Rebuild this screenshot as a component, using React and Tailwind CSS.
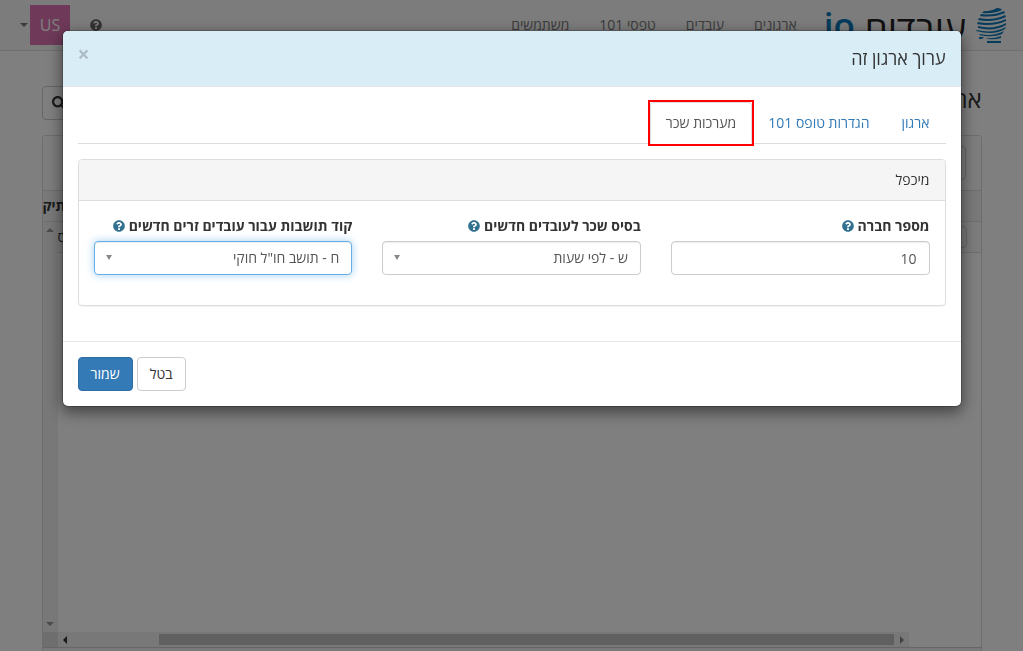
import { useState } from 'react';
import { FaQuestionCircle, FaSearch } from 'react-icons/fa';

const NAV_LINKS = ['ארגונים', 'עובדים', 'טפסי 101', 'משתמשים'];

const TABS = [
  { id: 'org', label: 'ארגון' },
  { id: 'form101', label: 'הגדרות טופס 101' },
  { id: 'payroll', label: 'מערכות שכר', marked: true },
];

export default function App() {
  return (
    <div
      dir="rtl"
      lang="he"
      className="h-screen overflow-hidden flex flex-col bg-white text-[#333] text-sm leading-5 font-['Open_Sans','Noto_Sans',sans-serif]"
    >
      <Navbar />
      <OrganizationsPage />
      <EditDialog />
    </div>
  );
}

function Navbar() {
  return (
    <header className="flex shrink-0 items-center h-[51px] px-4 bg-[#f8f8f8] border-b border-[#e0e0e0]">
      <a href="#home" className="flex items-center gap-[10px]">
        <HeadLogo />
        <span className="pt-2 text-[37px] leading-[38px] font-medium text-[#222]">עובדים</span>
        <b className="text-[35px] leading-[38px] font-semibold text-[#0a78b8]">io</b>
      </a>
      <nav className="flex mr-3">
        {NAV_LINKS.map((label) => (
          <a key={label} href="#nav" className="px-[15px] text-[#777]">
            {label}
          </a>
        ))}
      </nav>
      <div className="flex items-center mr-auto">
        <button type="button" aria-label="עזרה" className="ml-5 text-[#666]">
          <FaQuestionCircle className="size-3" />
        </button>
        <button type="button" className="flex items-center gap-[2px] pl-1">
          <span className="size-10 flex items-center justify-center bg-[#de74b4] text-white text-base">
            US
          </span>
          <Arrow points="0,2 8,2 4,6" color="#777" />
        </button>
      </div>
    </header>
  );
}

function HeadLogo() {
  return (
    <svg viewBox="0 0 31 35" className="w-[31px] h-[35px]" fill="#0a78b8">
      <path d="M8 3Q15 4 21 0Q25 0 26 2Q17 6 6 5Z" />
      <path d="M5 6Q17 8 28 3L29 5Q17 10 4 8Z" />
      <path d="M3 10Q17 13 29 7L30 9Q17 15 2 12Z" />
      <path d="M2 14Q17 17 30 11L30 13Q17 19 1 16Z" />
      <path d="M2 18Q17 22 30 15L30 17Q18 24 2 20Z" />
      <path d="M1 22Q17 26 30 19L29 21Q18 28 0 23Z" />
      <path d="M4 26Q17 29 28 23L26 26Q17 30 3 27Z" />
      <path d="M3 29L8 29L6 31L3 31Z" />
      <path d="M10 30Q18 31 25 28L25 30Q18 32 12 31Z" />
      <path d="M11 33H25V35H11Z" />
    </svg>
  );
}

function OrganizationsPage() {
  return (
    <main className="flex flex-col grow min-h-0 w-full max-w-[940px] mx-auto">
      <div className="flex items-center justify-between mt-[35px] mb-[15px]">
        <h1 className="pb-2 text-2xl leading-[26px]">ארגונים</h1>
        <button
          type="button"
          aria-label="חיפוש"
          className="h-[34px] px-[9px] border border-[#ccc] rounded text-[#333]"
        >
          <FaSearch className="size-[14px]" />
        </button>
      </div>

      <section className="flex flex-col grow min-h-0 border border-b-0 border-[#ddd] rounded-t">
        <div className="flex h-[55px] px-[15px] pt-[10px] bg-[#fbfbfb] border-b border-[#ddd]">
          <button type="button" className="h-[34px] px-3 border border-[#ccc] rounded">
            הוסף
          </button>
        </div>
        <div className="flex justify-end items-center h-[31px] bg-[#f3f3f3] border-b border-[#ddd] font-bold">
          <span>מספר תיק</span>
        </div>
        <div className="flex grow min-h-0">
          <div className="grow">
            <div className="flex items-center justify-between h-[31px] px-[14px] bg-[#f8f8f8] border-b border-[#ddd]">
              <input
                aria-label="סינון"
                className="w-28 h-[22px] border border-[#ccc] rounded"
              />
              <span className="-ml-[14px]">כרטיס</span>
            </div>
          </div>
          <div className="flex flex-col justify-between items-center w-[15px] pt-[6px] pb-1 bg-[#f1f1f1]">
            <Arrow points="0,4 8,4 4,0" />
            <Arrow points="0,2 8,2 4,6" />
          </div>
        </div>
        <div dir="ltr" className="flex items-center h-4 shrink-0 border-b border-[#ccc]">
          <div className="w-[15px] h-full bg-[#dcdcdc]" />
          <div className="flex grow items-center h-full mr-[72px] px-1 bg-[#f1f1f1]">
            <Arrow points="5,0 5,8 1,4" color="#333" />
            <div className="grow h-[11px] ml-[89px] mr-[3px] bg-[#c1c1c1]" />
            <Arrow points="3,0 3,8 7,4" color="#888" />
          </div>
        </div>
        <div className="h-[3px] shrink-0 bg-[#f3f3f3]" />
      </section>
    </main>
  );
}

function Arrow({ points, color = '#999' }) {
  return (
    <svg viewBox="0 0 8 8" className="size-2 shrink-0" fill={color}>
      <polygon points={points} />
    </svg>
  );
}

function EditDialog() {
  const [tab, setTab] = useState('payroll');

  return (
    <div className="fixed inset-0 flex justify-center items-start pt-[30px] bg-black/50">
      <div
        role="dialog"
        aria-labelledby="dialog-title"
        className="w-full max-w-[900px] bg-white bg-clip-padding border border-black/20 rounded-md shadow-[0_5px_15px_rgba(0,0,0,0.5)]"
      >
        <div className="flex justify-between items-start h-14 p-[15px] bg-[#d9edf7] border-b border-[#e5e5e5] rounded-t-[5px]">
          <h4 id="dialog-title" className="text-lg leading-[25px]">
            ערוך ארגון זה
          </h4>
          <button
            type="button"
            aria-label="סגור"
            className="text-[21px] leading-4 font-bold text-black opacity-20"
          >
            &times;
          </button>
        </div>

        <div className="p-[15px] pb-[35px]">
          <div role="tablist" className="flex mb-[15px] border-b border-[#ddd]">
            {TABS.map((t) => (
              <button
                key={t.id}
                type="button"
                role="tab"
                aria-selected={tab === t.id}
                onClick={() => setTab(t.id)}
                className={`relative -mb-px px-[15px] py-[10px] border rounded-t ${
                  tab === t.id
                    ? 'bg-white text-[#555] border-[#ddd] border-b-white'
                    : 'text-[#337ab7] border-transparent'
                }`}
              >
                {t.label}
                {t.marked && (
                  <span className="absolute -inset-[3px] border-2 border-[#ff0000]" />
                )}
              </button>
            ))}
          </div>
          <PayrollPanel />
        </div>

        <div className="flex justify-end gap-1 p-[15px] border-t border-[#e5e5e5]">
          <button type="button" className="h-[34px] px-3 border border-[#ccc] rounded bg-white">
            בטל
          </button>
          <button
            type="button"
            className="h-[34px] px-3 border border-[#2e6da4] rounded bg-[#337ab7] text-white"
          >
            שמור
          </button>
        </div>
      </div>
    </div>
  );
}

function PayrollPanel() {
  return (
    <section className="border border-[#ddd] rounded shadow-[0_1px_1px_rgba(0,0,0,0.05)]">
      <h5 className="px-[15px] py-[10px] bg-[#f5f5f5] border-b border-[#ddd] rounded-t">
        מיכפל
      </h5>
      <div className="grid grid-cols-3 gap-[30px] px-[15px] pt-[15px] pb-[30px]">
        <div>
          <FieldLabel htmlFor="company">מספר חברה</FieldLabel>
          <input
            id="company"
            type="text"
            defaultValue="10"
            className="block w-full h-[34px] px-3 border border-[#ccc] rounded text-[#555] shadow-[inset_0_1px_1px_rgba(0,0,0,0.075)] outline-none"
          />
        </div>
        <SelectField id="basis" label="בסיס שכר לעובדים חדשים" options={['ש - לפי שעות', 'ח - חודשי']} />
        <SelectField
          id="residency"
          label="קוד תושבות עבור עובדים זרים חדשים"
          options={['ח - תושב חו"ל חוקי', 'ת - תושב']}
          active
        />
      </div>
    </section>
  );
}

function FieldLabel({ htmlFor, children }) {
  return (
    <label htmlFor={htmlFor} className="flex items-center gap-1 mb-[5px] font-bold">
      {children}
      <FaQuestionCircle className="size-3 text-[#31708f]" />
    </label>
  );
}

function SelectField({ id, label, options, active }) {
  return (
    <div>
      <FieldLabel htmlFor={id}>{label}</FieldLabel>
      <div className="relative">
        <select
          id={id}
          className={`block w-full h-[34px] px-3 border rounded appearance-none bg-white text-[#555] outline-none ${
            active
              ? 'border-[#66afe9] shadow-[inset_0_1px_1px_rgba(0,0,0,0.075),0_0_8px_rgba(102,175,233,0.6)]'
              : 'border-[#ccc] shadow-[inset_0_1px_1px_rgba(0,0,0,0.075)]'
          }`}
        >
          {options.map((o) => (
            <option key={o}>{o}</option>
          ))}
        </select>
        <svg
          viewBox="0 0 6 5"
          className="absolute left-3 top-[14px] w-[6px] h-[5px] pointer-events-none"
          fill="#888"
        >
          <polygon points="0,0 6,0 3,5" />
        </svg>
      </div>
    </div>
  );
}
